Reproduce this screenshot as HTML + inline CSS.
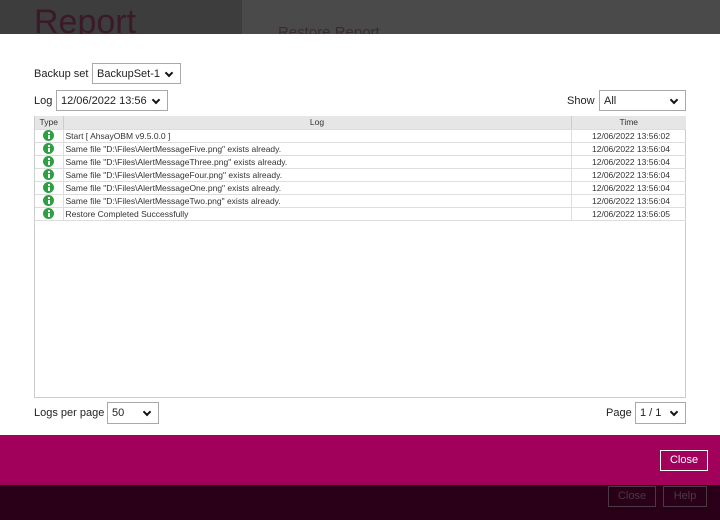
<!DOCTYPE html><html><head><style>
*{margin:0;padding:0;box-sizing:border-box}
body{width:720px;height:520px;position:relative;overflow:hidden;font-family:"Liberation Sans",sans-serif;background:#fff}
.a{position:absolute}
.sel{position:absolute;border:1px solid #a9a9a9;background:#fff;font-size:11px;color:#222;padding:4px 0 0 4px}
.sel:after{content:"";position:absolute;right:8px;top:6px;width:4px;height:4px;border-right:2.5px solid #111;border-bottom:2.5px solid #111;transform:rotate(45deg)}
.lbl{position:absolute;font-size:11px;color:#222}
table{border-collapse:collapse;font-size:8.5px;color:#333}
td{height:13px;border-bottom:1px solid #ddd;padding:0 2px;white-space:nowrap}
.ic{display:block;width:11px;height:11px;border-radius:50%;background:#2ea043;margin:0 auto;position:relative}
.ic:before{content:"";position:absolute;left:4.5px;top:2px;width:2px;height:2px;background:#fff}
.ic:after{content:"";position:absolute;left:4.5px;top:5px;width:2px;height:4px;background:#fff}
</style></head><body>
<div class="a" style="left:0;top:0;width:242px;height:34px;background:#3d3d3d"></div>
<div class="a" style="left:242px;top:0;width:478px;height:34px;background:#4a4a4a"></div>
<div class="a" style="left:34px;top:2px;font-size:34px;color:#3a1a28;line-height:40px;height:32px;overflow:hidden">Report</div>
<div class="a" style="left:278px;top:24px;font-size:15px;color:#3a2a32;line-height:18px;height:10px;overflow:hidden">Restore Report</div>

<div class="lbl" style="left:34px;top:68px">Backup set</div>
<div class="sel" style="left:92px;top:63px;width:89px;height:21px">BackupSet-1</div>
<div class="lbl" style="left:34px;top:95px">Log</div>
<div class="sel" style="left:56px;top:90px;width:112px;height:21px">12/06/2022 13:56</div>
<div class="lbl" style="left:567px;top:95px">Show</div>
<div class="sel" style="left:599px;top:90px;width:87px;height:21px">All</div>

<div class="a" style="left:34px;top:116px;width:652px;height:282px;border:1px solid #ccc;border-top:none">
<table style="width:651px">
<tr style="background:#e6e6e6;height:12px"><td style="width:28px;text-align:center;border-right:1px solid #ccc;height:12px">Type</td><td style="text-align:center;border-right:1px solid #ccc">Log</td><td style="width:115px;text-align:center">Time</td></tr>
<tr><td style="border-right:1px solid #ddd"><i class="ic"></i></td><td style="border-right:1px solid #ddd">Start [ AhsayOBM v9.5.0.0 ]</td><td style="text-align:right;padding-right:16px">12/06/2022 13:56:02</td></tr>
<tr><td style="border-right:1px solid #ddd"><i class="ic"></i></td><td style="border-right:1px solid #ddd">Same file "D:\Files\AlertMessageFive.png" exists already.</td><td style="text-align:right;padding-right:16px">12/06/2022 13:56:04</td></tr>
<tr><td style="border-right:1px solid #ddd"><i class="ic"></i></td><td style="border-right:1px solid #ddd">Same file "D:\Files\AlertMessageThree.png" exists already.</td><td style="text-align:right;padding-right:16px">12/06/2022 13:56:04</td></tr>
<tr><td style="border-right:1px solid #ddd"><i class="ic"></i></td><td style="border-right:1px solid #ddd">Same file "D:\Files\AlertMessageFour.png" exists already.</td><td style="text-align:right;padding-right:16px">12/06/2022 13:56:04</td></tr>
<tr><td style="border-right:1px solid #ddd"><i class="ic"></i></td><td style="border-right:1px solid #ddd">Same file "D:\Files\AlertMessageOne.png" exists already.</td><td style="text-align:right;padding-right:16px">12/06/2022 13:56:04</td></tr>
<tr><td style="border-right:1px solid #ddd"><i class="ic"></i></td><td style="border-right:1px solid #ddd">Same file "D:\Files\AlertMessageTwo.png" exists already.</td><td style="text-align:right;padding-right:16px">12/06/2022 13:56:04</td></tr>
<tr><td style="border-right:1px solid #ddd"><i class="ic"></i></td><td style="border-right:1px solid #ddd">Restore Completed Successfully</td><td style="text-align:right;padding-right:16px">12/06/2022 13:56:05</td></tr>
</table></div>

<div class="lbl" style="left:34px;top:407px">Logs per page</div>
<div class="sel" style="left:107px;top:402px;width:52px;height:22px">50</div>
<div class="lbl" style="left:606px;top:407px">Page</div>
<div class="sel" style="left:635px;top:402px;width:51px;height:22px">1 / 1</div>

<div class="a" style="left:0;top:435px;width:720px;height:50px;background:#a1005b"></div>
<div class="a" style="left:660px;top:450px;width:48px;height:21px;border:1.5px solid #fff;color:#fff;font-size:11px;text-align:center;line-height:18px">Close</div>
<div class="a" style="left:0;top:485px;width:720px;height:35px;background:#2a0019"></div>
<div class="a" style="left:608px;top:486px;width:48px;height:21px;border:1px solid #4a3a42;color:#4a3a42;font-size:11px;text-align:center;line-height:19px">Close</div>
<div class="a" style="left:663px;top:486px;width:44px;height:21px;border:1px solid #4a3a42;color:#4a3a42;font-size:11px;text-align:center;line-height:19px">Help</div>
</body></html>
